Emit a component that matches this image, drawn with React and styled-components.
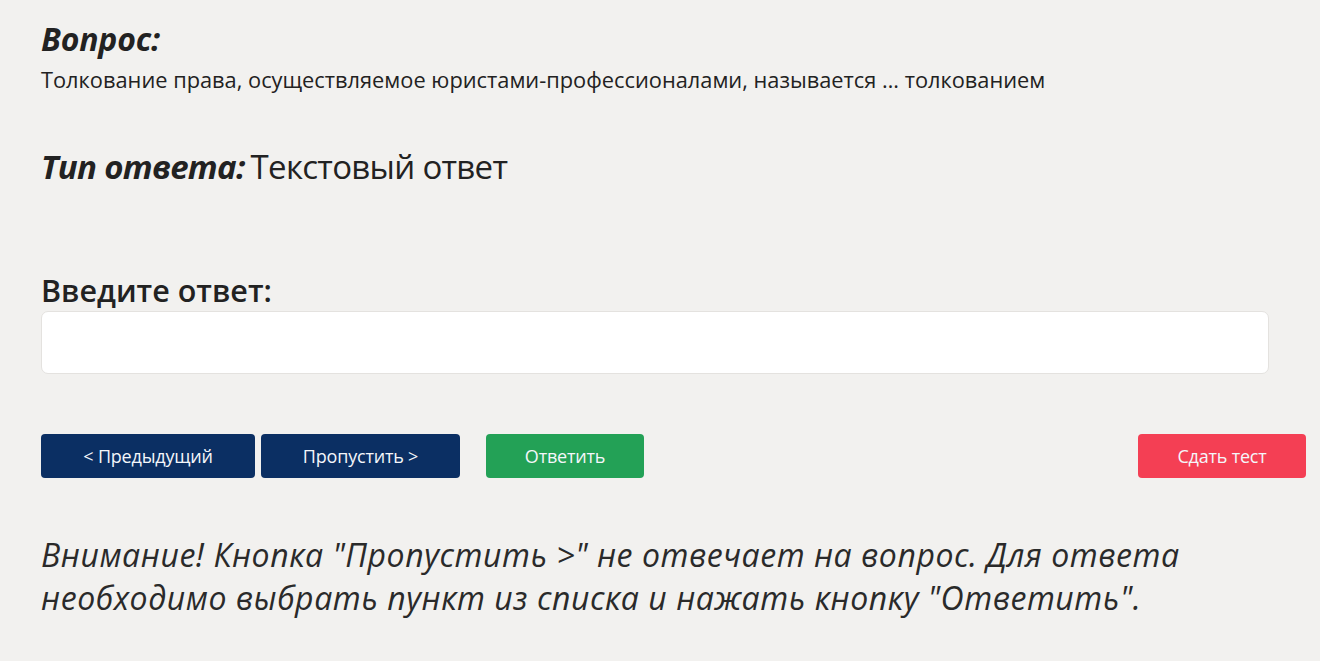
import React from "react";
import styled, { createGlobalStyle } from "styled-components";

const Global = createGlobalStyle`
  html, body { margin: 0; padding: 0; background: #f2f1ef; }
  body { font-family: "Open Sans", "Noto Sans", sans-serif; color: #222; }
`;

const Page = styled.main`
  padding: 19px 14px 30px 41px;
  display: flex;
  flex-direction: column;
`;

const Title = styled.h2`
  margin: 0;
  font-size: 32px;
  font-weight: 700;
  font-style: italic;
  line-height: 40px;
  letter-spacing: -0.2px;
`;

const Question = styled.p`
  margin: 7px 0 0;
  font-size: 21.8px;
  line-height: 28px;
`;

const TypeRow = styled.div`
  margin-top: 51px;
  font-size: 33px;
  line-height: 44px;
  letter-spacing: -0.7px;
`;

const TypeLabel = styled.span`
  font-weight: 700;
  font-style: italic;
  margin-right: 6px;
`;

const AnswerLabel = styled.label`
  margin-top: 81px;
  display: block;
  font-size: 30.5px;
  font-weight: 600;
  line-height: 40px;
`;

const Input = styled.input`
  box-sizing: border-box;
  width: 1228px;
  height: 63px;
  margin-top: 1px;
  border: 1px solid #e4e2df;
  border-radius: 7px;
  background: #fff;
  outline: none;
`;

const Buttons = styled.div`
  margin-top: 60px;
  display: flex;
  align-items: center;
  gap: 6px;
`;

const Button = styled.button`
  height: 44px;
  width: ${(p) => p.$w}px;
  margin-left: ${(p) => p.$ml || 0}px;
  border: none;
  border-radius: 4px;
  background: ${(p) => p.$bg};
  color: #f4f6fa;
  font-family: "Open Sans", "Noto Sans", sans-serif;
  font-size: 18px;
  letter-spacing: -0.2px;
  padding: 0;
  cursor: pointer;
`;

const Warning = styled.p`
  margin: 55px 0 0;
  font-size: 32px;
  font-style: italic;
  line-height: 43px;
  letter-spacing: 0.55px;
  color: #2a2a2a;
`;

export default function App() {
  return (
    <>
      <Global />
      <Page>
        <Title>Вопрос:</Title>
        <Question>
          Толкование права, осуществляемое юристами-профессионалами, называется … толкованием
        </Question>
        <TypeRow>
          <TypeLabel>Тип ответа:</TypeLabel>Текстовый ответ
        </TypeRow>
        <AnswerLabel htmlFor="ans">Введите ответ:</AnswerLabel>
        <Input id="ans" type="text" />
        <Buttons>
          <Button $w={214} $bg="#0b2f63">&lt; Предыдущий</Button>
          <Button $w={199} $bg="#0b2f63">Пропустить &gt;</Button>
          <Button $w={158} $bg="#23a156" $ml={20}>Ответить</Button>
          <Button $w={168} $bg="#f43f54" $ml={488}>Сдать тест</Button>
        </Buttons>
        <Warning>
          Внимание! Кнопка "Пропустить &gt;" не отвечает на вопрос. Для ответа
          <br />
          необходимо выбрать пункт из списка и нажать кнопку "Ответить".
        </Warning>
      </Page>
    </>
  );
}
